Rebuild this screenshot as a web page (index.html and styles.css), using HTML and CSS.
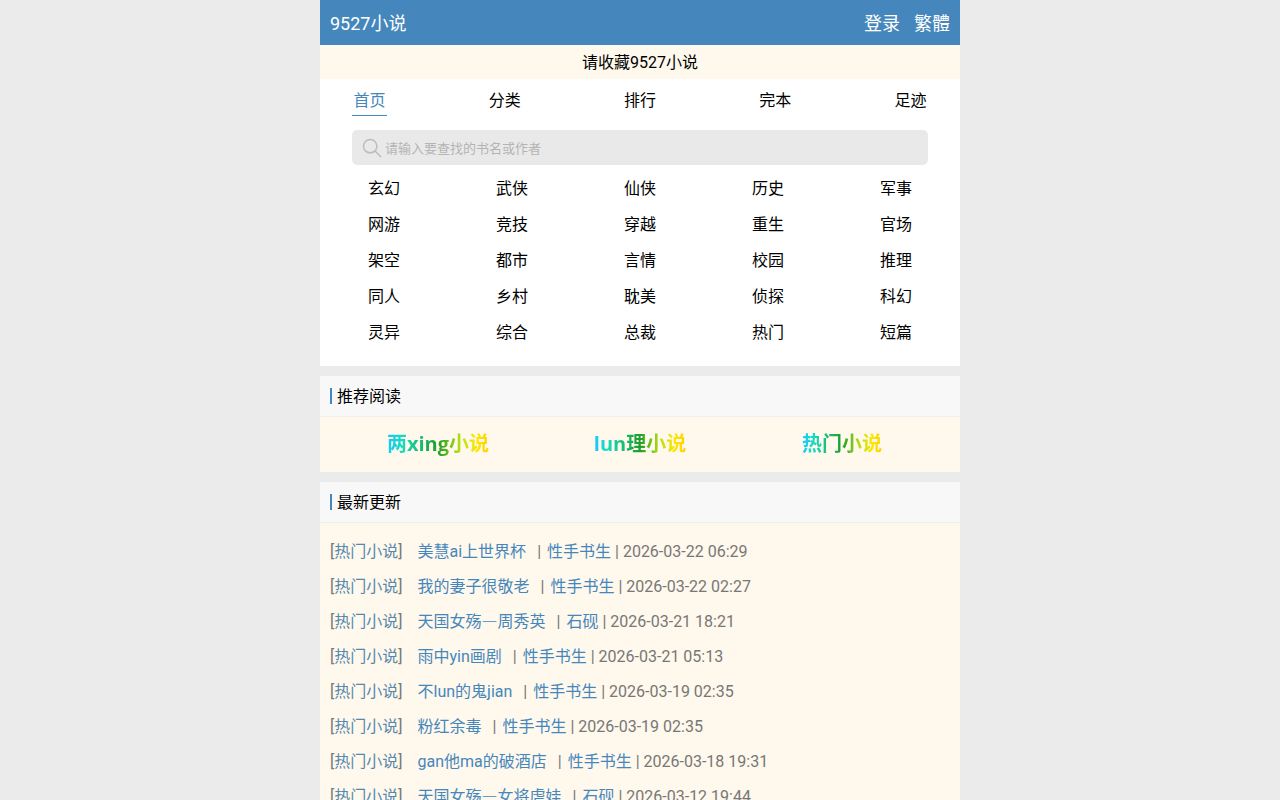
FILE: index.html
```html
<!DOCTYPE html>
<html lang="zh-CN">
<head>
<meta charset="utf-8">
<title>9527小说</title>
<link rel="stylesheet" href="styles.css">
</head>
<body>
<div class="page">
  <header class="top">
    <a class="logo">9527小说</a>
    <div class="top-links"><a>登录</a><a>繁體</a></div>
  </header>
  <div class="notice">请收藏9527小说</div>
  <section class="menu">
    <nav class="nav">
      <a class="active">首页</a><a>分类</a><a>排行</a><a>完本</a><a>足迹</a>
    </nav>
    <div class="search">
      <svg class="search-icon" viewBox="0 0 20 20" width="20" height="20"><circle cx="8.2" cy="8.2" r="6.7" fill="none" stroke="#bdbdbd" stroke-width="1.6"/><path d="M13 13l6 6" stroke="#bdbdbd" stroke-width="1.6" fill="none"/></svg>
      <span>请输入要查找的书名或作者</span>
    </div>
    <div class="cats">
      <a>玄幻</a><a>武侠</a><a>仙侠</a><a>历史</a><a>军事</a>
      <a>网游</a><a>竞技</a><a>穿越</a><a>重生</a><a>官场</a>
      <a>架空</a><a>都市</a><a>言情</a><a>校园</a><a>推理</a>
      <a>同人</a><a>乡村</a><a>耽美</a><a>侦探</a><a>科幻</a>
      <a>灵异</a><a>综合</a><a>总裁</a><a>热门</a><a>短篇</a>
    </div>
  </section>
  <section class="block">
    <h2 class="head"><span>推荐阅读</span></h2>
    <div class="recs">
      <a class="rainbow">两xing小说</a><a class="rainbow">lun理小说</a><a class="rainbow">热门小说</a>
    </div>
  </section>
  <section class="block">
    <h2 class="head"><span>最新更新</span></h2>
    <ul class="list">
      <li><span class="tag">[<a>热门小说</a>]</span><a class="title">美慧ai上世界杯</a><span class="sep">|</span><a>性手书生</a> | 2026-03-22 06:29</li>
      <li><span class="tag">[<a>热门小说</a>]</span><a class="title">我的妻子很敬老</a><span class="sep">|</span><a>性手书生</a> | 2026-03-22 02:27</li>
      <li><span class="tag">[<a>热门小说</a>]</span><a class="title">天国女殇<span class="cjk">—</span>周秀英</a><span class="sep">|</span><a>石砚</a> | 2026-03-21 18:21</li>
      <li><span class="tag">[<a>热门小说</a>]</span><a class="title">雨中yin画剧</a><span class="sep">|</span><a>性手书生</a> | 2026-03-21 05:13</li>
      <li><span class="tag">[<a>热门小说</a>]</span><a class="title">不lun的鬼jian</a><span class="sep">|</span><a>性手书生</a> | 2026-03-19 02:35</li>
      <li><span class="tag">[<a>热门小说</a>]</span><a class="title">粉红余毒</a><span class="sep">|</span><a>性手书生</a> | 2026-03-19 02:35</li>
      <li><span class="tag">[<a>热门小说</a>]</span><a class="title">gan他ma的破酒店</a><span class="sep">|</span><a>性手书生</a> | 2026-03-18 19:31</li>
      <li><span class="tag">[<a>热门小说</a>]</span><a class="title">天国女殇<span class="cjk">—</span>女将虐娃</a><span class="sep">|</span><a>石砚</a> | 2026-03-12 19:44</li>
    </ul>
  </section>
</div>
</body>
</html>
```
FILE: styles.css
```css
* { box-sizing: border-box; }
html, body { margin: 0; padding: 0; height: 800px; overflow: hidden; }
body {
  background: #ebebeb;
  font-family: Roboto, "Noto Sans CJK SC", sans-serif;
  font-size: 16px;
  color: #000;
}
.page { width: 640px; margin: 0 auto; }
.top {
  height: 45px;
  background: #4587bc;
  color: #fff;
  font-size: 18px;
  line-height: 47px;
  display: flex;
  justify-content: space-between;
  padding: 0 10px;
}
.top-links { display: flex; gap: 14px; }
.notice {
  height: 34px;
  line-height: 36px;
  background: #fff8ec;
  text-align: center;
}
.menu { background: #fff; height: 287px; padding: 0 32px; margin-bottom: 10px; }
.nav { display: flex; justify-content: space-between; height: 37px; padding-top: 3px; }
.nav a { width: 35px; height: 34px; line-height: 38px; text-align: center; }
.nav .active { color: #4587bc; border-bottom: 1px solid #4587bc; }
.search {
  margin-top: 14px;
  height: 35px;
  background: #e9e9e9;
  border-radius: 5px;
  display: flex;
  align-items: center;
  padding-left: 10px;
  gap: 3px;
  color: #b4b4b4;
  font-size: 13px;
}
.cats {
  margin: 5px -32px 0;
  display: grid;
  grid-template-columns: repeat(5, 1fr);
  grid-auto-rows: 36px;
  text-align: center;
  line-height: 38px;
}
.block { margin-bottom: 10px; }
.head {
  margin: 0;
  height: 41px;
  background: #f8f8f8;
  border-bottom: 1px solid #eeeeee;
  font-size: 16px;
  font-weight: 400;
  display: flex;
  align-items: center;
  padding-left: 10px;
}
.head span {
  border-left: 2px solid #4587bc;
  padding-left: 5px;
  height: 16px;
  line-height: 18px;
}
.recs {
  height: 55px;
  background: #fff8ec;
  display: grid;
  grid-template-columns: repeat(3, 1fr);
  align-items: center;
  text-align: center;
  padding: 0 17px 4px;
}
.rainbow {
  justify-self: center;
  font-family: "Open Sans", "Noto Sans CJK SC", sans-serif;
  font-size: 20px;
  font-weight: 700;
  background: linear-gradient(90deg, #19c8ff 0%, #15dcc0 15%, #1d9e2a 50%, #b8e010 72%, #ffe600 88%, #ffd000 100%);
  -webkit-background-clip: text;
  background-clip: text;
  color: transparent;
}
.list {
  list-style: none;
  margin: 0;
  padding: 11px 10px 0;
  background: #fff8ec;
  color: #777;
  height: 300px;
}
.list li { height: 35px; line-height: 35px; white-space: nowrap; }
.list a { color: #4587bc; }
.list .tag { margin-right: 15px; }
.list .tag a { color: #5688ae; }
.list .sep { margin: 0 6px 0 11px; }
.cjk { font-family: "Noto Sans CJK SC", sans-serif; line-height: 0; }
```
